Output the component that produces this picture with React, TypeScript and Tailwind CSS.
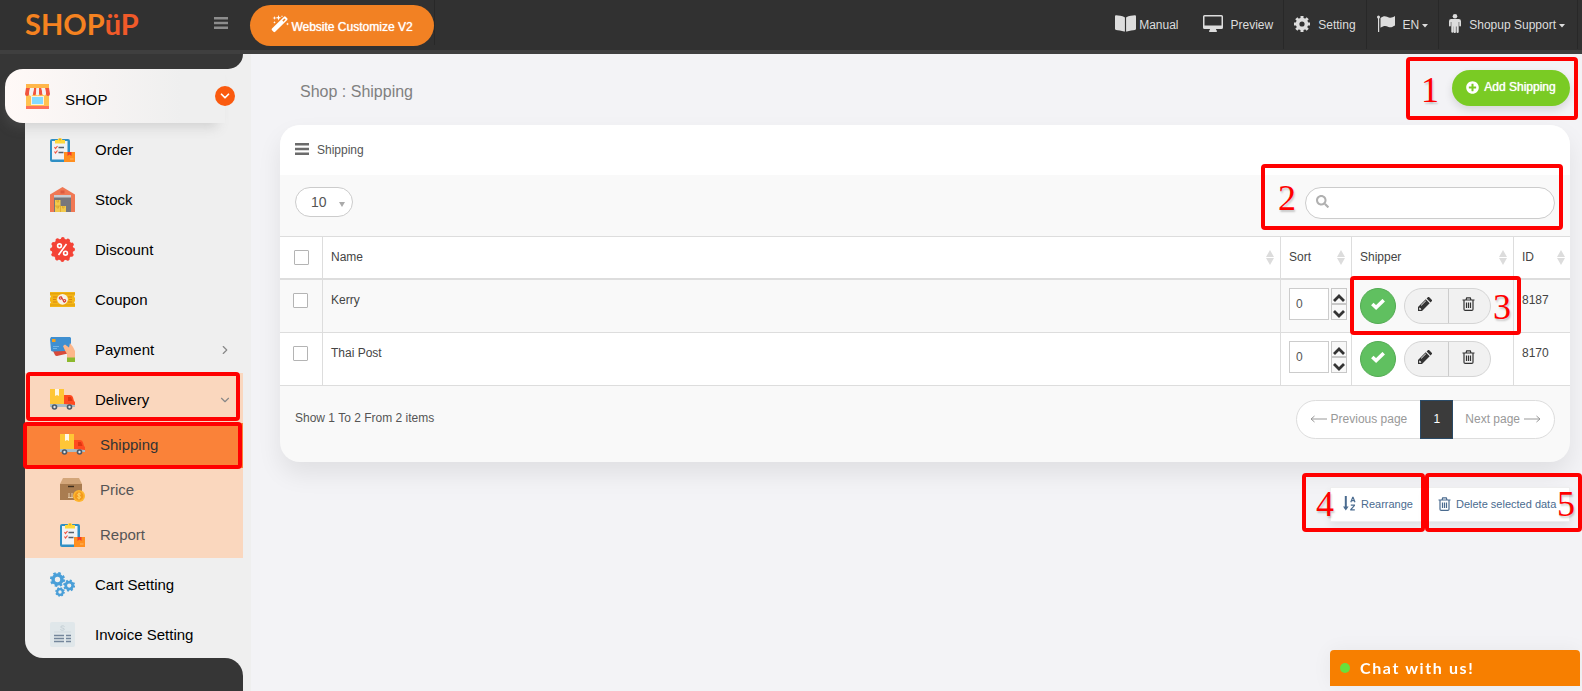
import type { ReactNode } from "react";
import clsx from "clsx";
import { FaBookOpen, FaPlusCircle, FaSearch } from "react-icons/fa";
import { ChevronDown, ChevronRight } from "lucide-react";

function ShopIcon() {
    return (
        <svg viewBox="0 0 25 25" className="size-[25px]" aria-hidden="true">
            <path d="M1 10h23v12H1z" fill="#ffc24f" />
            <path d="M1 0h23v4H1z" fill="#ffb74a" />
            <path d="M1 22h23v3H1z" fill="#ff7058" />
            <path d="M6 12h13v9H6z" fill="#fff0d9" />
            <path d="M7 13h11v7H7z" fill="#84dbff" />
            <path
                d="M1 4h4l-1 6a2 2 0 0 1-4 0zM9 4h2.500l-.5 6a1.900 1.900 0 0 1-3.500 0zM14 4h2.500l1 6a1.900 1.900 0 0 1-3.500 0zM20 4h4l1 6a2 2 0 0 1-4 0z"
                fill="#f1543f"
            />
            <path
                d="M5 4h4l-1 6a2 2 0 0 1-4 0zM11.500 4H14v6a1.500 1.500 0 0 1-3 0zM16.500 4H20l1 6a1.800 1.800 0 0 1-3.500 0z"
                fill="#f2f2f2"
            />
        </svg>
    );
}

function OrderIcon() {
    return (
        <svg viewBox="0 0 25 25" className="size-[25px]" aria-hidden="true">
            <rect x="0" y="2" width="20" height="23" rx="2" fill="#2f8fc4" />
            <path d="M2 4h15.500v18.500H2z" fill="#f1f2f4" />
            <path d="M5 3h2.500a2.600 2.600 0 0 1 5 0H15v3.500H5z" fill="#ffd83b" />
            <circle cx="10" cy="2.500" r="1" fill="#e8a91d" />
            <path
                d="m4.500 10 1 1.500L7.500 9M4.500 14.500l1 1.500 2-2.500"
                fill="none"
                stroke="#f1543f"
                strokeWidth="1.200"
            />
            <path d="M8.500 10.500H14M8.500 15.500h5" stroke="#56606b" strokeWidth="1.400" />
            <path d="M14 15h11v10H14z" fill="#ff8f1f" />
            <path d="M17.500 15h4v4l-2-1.500-2 1.500z" fill="#f23d2c" />
            <path d="M20 22h3.500" stroke="#ffb562" />
        </svg>
    );
}

function StockIcon() {
    return (
        <svg viewBox="0 0 25 25" className="size-[25px]" aria-hidden="true">
            <path d="M0 7.500 12.500 0 25 7.500V25H0z" fill="#f07854" />
            <path d="M10.500 3.500h4v3h-4z" fill="#dc5b3f" />
            <path d="M4 8h17v17H4z" fill="#77777b" />
            <path d="M4 8h17v2.500H4z" fill="#c9ccd1" />
            <path d="M5 13h5.500v6H16v6H5z" fill="#f2c94c" />
            <path
                d="M5 19h5.500v6M7 13v2h1.500v-2M7 19v2h1.500v-2M12.500 19v2H14v-2"
                fill="none"
                stroke="#d9a52c"
                strokeWidth=".8"
            />
        </svg>
    );
}

function DiscountIcon() {
    return (
        <svg viewBox="0 0 25 25" className="size-[25px]" aria-hidden="true">
            <circle cx="12.500" cy="12.500" r="10.800" fill="#f44336" />
            <circle
                cx="12.500"
                cy="12.500"
                r="10.600"
                fill="none"
                stroke="#f44336"
                strokeWidth="3.800"
                strokeDasharray="0.010 5.540"
                strokeLinecap="round"
            />
            <g fill="none" stroke="#fff" strokeWidth="1.600">
                <circle cx="9.500" cy="8.800" r="1.900" />
                <circle cx="15.500" cy="16.200" r="1.900" />
                <path d="m16.500 7-8 11" />
            </g>
        </svg>
    );
}

function CouponIcon() {
    return (
        <svg viewBox="0 0 25 25" className="size-[25px]" aria-hidden="true">
            <path
                d="M0 5h25v3l-1 1.500 1 1.500v3l-1 1.500 1 1v3.500H0v-3.500l1-1L0 14v-3l1-1.500L0 8z"
                fill="#f4b616"
            />
            <path d="M0 6.800h25M0 18h25" stroke="#dd9c0c" />
            <path
                d="M3 10h4M3 12.500h3M3 15h4M18 10h4M19 12.500h3M18 15h4"
                stroke="#d98312"
                strokeWidth="1.200"
            />
            <circle cx="12.500" cy="12.300" r="5.400" fill="#f6f1e6" />
            <g fill="none" stroke="#d8453c" strokeWidth="1.200">
                <circle cx="10.500" cy="11" r="1.200" />
                <circle cx="14.500" cy="13.700" r="1.200" />
                <path d="m11 9.500 3.500 6" />
            </g>
        </svg>
    );
}

function PaymentIcon() {
    return (
        <svg viewBox="0 0 25 25" className="size-[25px]" aria-hidden="true">
            <path d="m3 14 14-3 3 2v3l-13 3a2 2 0 0 1-2-1z" fill="#d84a3a" />
            <path
                d="M1 0h19l1 1v10l-6 3-12 .5a2 2 0 0 1-2-1L0 2z"
                fill="#3f8fd0"
            />
            <path d="M2 2h3.500v3H2z" fill="#f7a11b" />
            <path
                d="M3 9.500h6M3 11.500h4"
                stroke="#7fbce8"
                strokeWidth=".8"
            />
            <path
                d="m13 9 2-1.500 4 3 1-4.500 3 4 2 4v7h-8v-4l-2-3.500z"
                fill="#fdb78b"
            />
            <path d="M17 20.500h8V25h-8z" fill="#8db92e" />
        </svg>
    );
}

function TruckIcon() {
    return (
        <svg viewBox="0 0 25 25" className="size-[25px]" aria-hidden="true">
            <path d="M0 2h14v16H0z" fill="#ffc636" />
            <path d="M5 2h4v7L7 8 5 9z" fill="#fff6e3" />
            <path
                d="M14 8h6a3 3 0 0 1 3 2.500l1 3.500 1 1v4H14z"
                fill="#ff4a20"
            />
            <path d="M18 10h3l1.500 4H18z" fill="#e03511" />
            <path d="M0 17h14l11 1v2H0z" fill="#a7bdc7" />
            <circle cx="4.500" cy="20" r="2.800" fill="#4d5966" />
            <circle cx="4.500" cy="20" r="1.200" fill="#dfe6ea" />
            <circle cx="19.500" cy="20" r="2.800" fill="#4d5966" />
            <circle cx="19.500" cy="20" r="1.200" fill="#dfe6ea" />
        </svg>
    );
}

function PriceIcon() {
    return (
        <svg viewBox="0 0 25 25" className="size-[25px]" aria-hidden="true">
            <path d="M3 1h16l3 6H0z" fill="#d3a67a" />
            <path d="M0 7h22v16H0z" fill="#a97c50" />
            <path d="M8 9.500h6" stroke="#3f2e1e" strokeWidth="1.400" />
            <path
                d="M9 16v4M12 16v4M8 20.500h5"
                stroke="#e6cba8"
                strokeWidth="1"
            />
            <circle cx="19" cy="19" r="6" fill="#fdb62f" />
            <circle cx="19" cy="19" r="4.400" fill="#f39a1e" />
            <path
                d="M20.800 17.200c-1-1-3.400-.6-3.200.7.200 1.200 3 .8 3 2.300-.1 1.300-2.500 1.300-3.400.3M19 15.500v7"
                fill="none"
                stroke="#ffd76b"
            />
        </svg>
    );
}

/** Ring with eight teeth around it */
function Gear({ cx, cy, r }: { cx: number; cy: number; r: number }) {
    const tooth = (r * 2 * Math.PI) / 16;
    return (
        <g fill="none" stroke="currentColor">
            <circle cx={cx} cy={cy} r={r * 0.7} strokeWidth={r * 0.55} />
            <circle
                cx={cx}
                cy={cy}
                r={r}
                strokeWidth={r * 0.4}
                strokeDasharray={`${tooth} ${tooth}`}
            />
        </g>
    );
}

function CartIcon() {
    return (
        <svg
            viewBox="0 0 25 25"
            className="size-[25px] text-[#4a9fd8]"
            aria-hidden="true"
        >
            <Gear cx={7.5} cy={7.5} r={6.3} />
            <Gear cx={19.2} cy={13.5} r={5} />
            <Gear cx={10} cy={20} r={4} />
        </svg>
    );
}

function CogIcon() {
    return (
        <svg
            viewBox="0 0 16 16"
            className="size-4"
            fill="none"
            stroke="currentColor"
            aria-hidden="true"
        >
            <circle cx="8" cy="8" r="4.400" strokeWidth="3.600" />
            <path
                d="M8 0v3M8 13v3M0 8h3M13 8h3M2.300 2.300l2.200 2.200M11.500 11.500l2.200 2.200M2.300 13.700l2.200-2.200M11.500 4.500l2.200-2.200"
                strokeWidth="3"
            />
        </svg>
    );
}

function InvoiceIcon() {
    return (
        <svg viewBox="0 0 25 25" className="size-[25px]" aria-hidden="true">
            <rect width="25" height="25" rx="2" fill="#e0e7ea" />
            <path
                d="M14.500 4.500c-1-1-4-.8-3.800.6.200 1.400 3.800.6 3.600 2.200-.2 1.300-3 1.200-4 .2"
                fill="none"
                stroke="#c3ced4"
            />
            <path d="M4 10h17" stroke="#d0d9de" />
            <path
                d="M4 13.500h10M4 16.500h10M4 19.500h10M16 13.500h5M16 16.500h5M16 19.500h5"
                stroke="#74869b"
                strokeWidth="1.400"
            />
        </svg>
    );
}

function WandIcon() {
    return (
        <svg
            viewBox="0 0 18 18"
            className="size-[18px]"
            fill="currentColor"
            aria-hidden="true"
        >
            <path
                fillRule="evenodd"
                d="M1 13.500 13 1.800a1.200 1.200 0 0 1 1.700 0l1.500 1.500a1.200 1.200 0 0 1 0 1.700L4.200 16.700a1.200 1.200 0 0 1-1.700 0L1 15.200a1.200 1.200 0 0 1 0-1.700zM11.300 5.600l1.100 1.100 2.200-2.200-1.100-1.100z"
            />
            <path d="m3.500 1 .5 1.500 1.500.5-1.500.5L3.500 5 3 3.500 1.500 3 3 2.500zM7.500 0l.7 2 2 .7-2 .7-.7 2-.7-2-2-.7 2-.7zM11 0l.3.900.9.300-.9.300-.3 1-.3-1-.9-.3.9-.3zM16.500 7.500l.4 1.100 1.100.4-1.100.4-.4 1.100-.4-1.100L15 9l1.100-.4zM3.500 6l.4 1 1 .4-1 .4-.4 1-.4-1-1-.4 1-.4z" />
        </svg>
    );
}

function DesktopIcon() {
    return (
        <svg viewBox="0 0 20 17" className="h-[17px] w-5" aria-hidden="true">
            <path
                fillRule="evenodd"
                fill="currentColor"
                d="M1.500 0h17A1.500 1.500 0 0 1 20 1.500v11a1.500 1.500 0 0 1-1.500 1.500H13c0 1 1 1.500 1 2.200 0 .5-.3.800-.8.800H6.800c-.5 0-.8-.3-.8-.8C6 15.500 7 15 7 14H1.500A1.500 1.500 0 0 1 0 12.500v-11A1.500 1.500 0 0 1 1.500 0zM1.500 1.500v9h17v-9z"
            />
        </svg>
    );
}

function FlagIcon() {
    return (
        <svg
            viewBox="0 0 18 17"
            className="h-[17px] w-[18px]"
            fill="currentColor"
            aria-hidden="true"
        >
            <circle cx="1.500" cy="2" r="1.500" />
            <path d="M1 2h1.200v15H1zM3.500 3C7-.2 10 1.500 12 2.500c2 .8 4-.4 6-1.500v9.500c-2 1-4 2.500-6.500 1.500-2.500-1.200-4.500-1.500-8 .7z" />
        </svg>
    );
}

function MaleIcon() {
    return (
        <svg
            viewBox="0 0 12 19"
            className="h-[19px] w-3"
            fill="currentColor"
            aria-hidden="true"
        >
            <circle cx="6" cy="2.300" r="2.300" />
            <path d="M2.500 5h7A2.300 2.300 0 0 1 12 7.300v4.200a.9.900 0 0 1-1.800 0V8h-.5v10a1.100 1.100 0 0 1-1.100 1 1.100 1.100 0 0 1-1.100-1v-5.500h-.6V18c0 .6-.5 1-1.100 1a1.100 1.100 0 0 1-1.200-1v-5.500H4.400V18a1.100 1.100 0 0 1-2.100 0V8h-.5v3.500a.9.900 0 0 1-1.800 0V7.300A2.300 2.300 0 0 1 2.500 5z" />
        </svg>
    );
}

function PencilIcon() {
    return (
        <svg
            viewBox="0 0 14 14"
            className="size-[14px]"
            fill="currentColor"
            aria-hidden="true"
        >
            <path
                fillRule="evenodd"
                d="M0 14v-4L7.700 2.300l4 4L4 14zM1.200 11.200v1.600h1.600l.6-.6-1.600-1.600zM7.500 3.600 2.800 8.300l.5.5L8 4.100z"
            />
            <path d="m8.600 1.500 1.200-1.200a1 1 0 0 1 1.500 0l2.400 2.400a1 1 0 0 1 0 1.500l-1.200 1.200z" />
        </svg>
    );
}

function CheckIcon() {
    return (
        <svg
            viewBox="0 0 14 11"
            className="h-[11px] w-[14px]"
            fill="none"
            stroke="currentColor"
            strokeWidth="3.600"
            aria-hidden="true"
        >
            <path d="m1.300 5 3.800 3.500L12.700 1.200" />
        </svg>
    );
}

function SpinChevron({ className }: { className?: string }) {
    return (
        <svg
            viewBox="0 0 12 8"
            className={clsx("h-2 w-3 shrink-0", className)}
            fill="none"
            stroke="currentColor"
            strokeWidth="2.800"
            aria-hidden="true"
        >
            <path d="m1 7 5-5 5 5" />
        </svg>
    );
}

function CaretIcon() {
    return (
        <svg
            viewBox="0 0 6 4"
            className="mt-[3px] h-1 w-1.5"
            fill="currentColor"
            aria-hidden="true"
        >
            <path d="M0 0h6L3 3.500z" />
        </svg>
    );
}

function TrashIcon({ className }: { className: string }) {
    return (
        <svg
            viewBox="0 0 13 14"
            className={className}
            fill="none"
            stroke="currentColor"
            strokeWidth="1.200"
            aria-hidden="true"
        >
            <path d="M.5 3h12M4 3l.7-2.200h3.600L9 3M2 3v9.200c0 .7.500 1.200 1.200 1.200h6.600c.7 0 1.200-.5 1.200-1.200V3M4.500 5.500v5.500M6.500 5.500v5.500M8.500 5.500v5.500" />
        </svg>
    );
}

function SortAlphaIcon() {
    return (
        <svg
            viewBox="0 0 13 15"
            className="h-[15px] w-[13px]"
            fill="none"
            stroke="currentColor"
            aria-hidden="true"
        >
            <path d="M2.800 0v13" strokeWidth="2" />
            <path d="M0 10.500h5.600L2.800 14.500z" fill="currentColor" stroke="none" />
            <path
                d="m7.800 6.200 1.900-4.900h.4l1.900 4.900M8.500 4.700h2.800M7.800 9.200h3.600v.4l-3.600 3.900v.4h4"
                strokeWidth="1.200"
            />
        </svg>
    );
}

function BarsIcon({ className }: { className?: string }) {
    return (
        <svg
            viewBox="0 0 14 12"
            className={clsx("h-3 w-[14px]", className)}
            fill="currentColor"
            aria-hidden="true"
        >
            <path d="M0 0h14v2.500H0zM0 4.700h14v2.500H0zM0 9.500h14V12H0z" />
        </svg>
    );
}

function LongArrow({ className }: { className?: string }) {
    return (
        <svg
            viewBox="0 0 17 8"
            className={clsx("h-2 w-[17px]", className)}
            fill="none"
            stroke="currentColor"
            aria-hidden="true"
        >
            <path d="M0 4h16M12.500 1l3.500 3-3.500 3" />
        </svg>
    );
}

function SorterIcon() {
    return (
        <svg
            viewBox="0 0 8 15"
            className="h-[15px] w-2 shrink-0"
            fill="#dcdcdc"
            aria-hidden="true"
        >
            <path d="M4 0l4 7H0zM4 15l4-7H0z" />
        </svg>
    );
}

/** Red frame laid over the part of the page that a guide step talks about */
function Callout({
    className,
    children,
}: {
    className: string;
    children?: ReactNode;
}) {
    return (
        <div
            className={clsx(
                "pointer-events-none absolute z-20 flex items-center rounded-sm border-4 border-[#ff0000] pt-0.5 font-['Liberation_Serif',serif] text-4xl leading-none text-[#ff0000] [text-shadow:1px_2px_2px_rgba(0,0,0,0.2)]",
                className,
            )}
        >
            {children}
        </div>
    );
}

function TopLink({
    icon,
    label,
    className,
    caret,
}: {
    icon: ReactNode;
    label: string;
    className: string;
    caret?: boolean;
}) {
    return (
        <a
            href="#"
            className={clsx(
                "flex h-[49px] items-center whitespace-nowrap text-xs text-[#dddddd]",
                className,
            )}
        >
            <span className="pb-0.5">{icon}</span>
            <span className="flex items-center gap-[3px]">
                {label}
                {caret && <CaretIcon />}
            </span>
        </a>
    );
}

function TopBar() {
    return (
        <header className="flex h-[54px] shrink-0 items-start border-b-4 border-[#3f3f3f] bg-[#313131]">
            <a
                href="#"
                className="flex h-[47px] w-[214px] items-center pl-[25px] font-[Lato,sans-serif] text-[29px] font-bold leading-none text-[#f58220]"
            >
                SHOP<span className="text-[#f15a29]">üP</span>
            </a>
            <button
                type="button"
                aria-label="Toggle menu"
                className="mt-[17px] text-[#8d8d8d]"
            >
                <BarsIcon />
            </button>
            <div className="ml-[22px] h-[45px] border-r border-[#282828] pt-[5px]">
                <button
                    type="button"
                    className="flex h-[41px] w-[184px] items-center justify-center gap-0.5 rounded-full bg-[#f28123] pt-0.5 text-xs text-white [text-shadow:0_0_1px_#ffffff]"
                >
                    <span className="pb-1.5">
                        <WandIcon />
                    </span>
                    Website Customize V2
                </button>
            </div>
            <nav className="ml-auto mr-1 flex">
                <TopLink
                    icon={<FaBookOpen className="size-[21px]" />}
                    label="Manual"
                    className="mr-6 gap-[3px]"
                />
                <TopLink
                    icon={<DesktopIcon />}
                    label="Preview"
                    className="gap-2 border-r border-[#282828] pr-[10px]"
                />
                <TopLink
                    icon={<CogIcon />}
                    label="Setting"
                    className="gap-2 border-r border-[#282828] px-[10px]"
                />
                <TopLink
                    icon={<FlagIcon />}
                    label="EN"
                    caret
                    className="gap-2 border-r border-[#282828] px-[10px]"
                />
                <TopLink
                    icon={<MaleIcon />}
                    label="Shopup Support"
                    caret
                    className="gap-2 border-r border-[#282828] pl-[10px] pr-3"
                />
            </nav>
        </header>
    );
}

function MenuItem({
    icon,
    label,
    children,
}: {
    icon: ReactNode;
    label: string;
    children?: ReactNode;
}) {
    return (
        <a
            href="#"
            className="flex h-[50px] w-[218px] items-center pl-[25px] pr-[11px] pt-1 text-[15px] text-black"
        >
            <span className="pb-0.5">{icon}</span>
            <span className="ml-5 grow">{label}</span>
            {children}
        </a>
    );
}

function SubMenuItem({
    icon,
    label,
    active,
}: {
    icon: ReactNode;
    label: string;
    active?: boolean;
}) {
    return (
        <a
            href="#"
            className={clsx(
                "relative flex h-[45px] items-center gap-[15px] pl-[35px] text-[15px]",
                active ? "bg-[#fa8239] text-[#333333]" : "text-[#555555]",
            )}
        >
            <span className="pb-0.5">{icon}</span>
            {label}
            {active && <Callout className="-bottom-px -left-0.5 -top-px right-px" />}
        </a>
    );
}

function Sidebar() {
    return (
        <aside className="flex w-[251px] shrink-0 flex-col bg-[#363636]">
            <div className="bg-[#efefef]">
                <div className="h-[15px] w-[243px] rounded-br-[15px] bg-[#363636]" />
            </div>
            <div className="relative z-10 flex bg-[linear-gradient(to_right,transparent_25px,#efefef_25px)] pl-[5px]">
                <a
                    href="#"
                    className="flex h-[54px] w-[220px] items-center rounded-l-[18px] bg-[linear-gradient(to_right,#fff9f7,#efefef_80%)] pl-5 text-[15px] text-black shadow-[-4px_8px_12px_-4px_rgba(120,120,120,0.25)]"
                >
                    <ShopIcon />
                    <span className="ml-[15px] grow pt-2">SHOP</span>
                    <span className="-mr-[10px] flex size-5 items-center justify-center rounded-full bg-[#fa5a0f] text-white">
                        <ChevronDown className="size-[14px]" strokeWidth={3} />
                    </span>
                </a>
            </div>
            <nav className="ml-[25px] rounded-bl-[18px] bg-[#efefef]">
                <MenuItem icon={<OrderIcon />} label="Order" />
                <MenuItem icon={<StockIcon />} label="Stock" />
                <MenuItem icon={<DiscountIcon />} label="Discount" />
                <MenuItem icon={<CouponIcon />} label="Coupon" />
                <MenuItem icon={<PaymentIcon />} label="Payment">
                    <ChevronRight className="size-[14px] text-[#888888]" />
                </MenuItem>
                <div className="w-[218px] bg-[#fad7be]">
                    <div className="relative">
                        <MenuItem icon={<TruckIcon />} label="Delivery">
                            <ChevronDown className="size-[14px] text-[#888888]" />
                        </MenuItem>
                        <Callout className="-top-px bottom-0.5 left-px right-[3px]" />
                    </div>
                    <SubMenuItem icon={<TruckIcon />} label="Shipping" active />
                    <SubMenuItem icon={<PriceIcon />} label="Price" />
                    <SubMenuItem icon={<OrderIcon />} label="Report" />
                </div>
                <MenuItem icon={<CartIcon />} label="Cart Setting" />
                <MenuItem icon={<InvoiceIcon />} label="Invoice Setting" />
            </nav>
            <div className="flex grow flex-col bg-[linear-gradient(to_right,#363636_200px,#efefef_200px)]">
                <div className="w-[243px] grow rounded-tr-[18px] bg-[#363636]" />
            </div>
        </aside>
    );
}

const SHIPPERS = [
    { id: 8187, name: "Kerry", sort: 0 },
    { id: 8170, name: "Thai Post", sort: 0 },
];

const CHECKBOX =
    "block size-[15px] appearance-none rounded-[1px] border border-[#b4b4b4] bg-white";

function HeadCell({ label, last }: { label: string; last?: boolean }) {
    return (
        <th
            scope="col"
            className={clsx(
                "border-b-2 border-t border-[#dddddd] px-2 font-normal",
                !last && "border-r",
            )}
        >
            <div
                className={clsx(
                    "-mt-px flex items-center justify-between",
                    last ? "-mr-[3px]" : "-mr-0.5",
                )}
            >
                {label}
                <SorterIcon />
            </div>
        </th>
    );
}

function SortField({ name, value }: { name: string; value: number }) {
    return (
        <div className="flex gap-0.5">
            <input
                type="text"
                aria-label={`Sort order of ${name}`}
                defaultValue={value}
                className="h-8 w-10 border border-[#cccccc] bg-white px-1.5 text-xs text-[#555555]"
            />
            <div className="flex w-4 flex-col">
                <button
                    type="button"
                    aria-label="Move up"
                    className="flex h-4 items-center justify-center border border-[#c8c8c8] bg-[#f8f8f8] pt-1 text-[#333333]"
                >
                    <SpinChevron />
                </button>
                <button
                    type="button"
                    aria-label="Move down"
                    className="flex h-4 items-center justify-center border border-[#c8c8c8] bg-[#f8f8f8] pt-1 text-[#333333]"
                >
                    <SpinChevron className="rotate-180" />
                </button>
            </div>
        </div>
    );
}

function RowActions() {
    return (
        <div className="flex gap-2">
            <button
                type="button"
                aria-label="Active"
                className="flex size-9 items-center justify-center rounded-full border border-[#53ab53] bg-[#60c060] pb-1 text-white"
            >
                <CheckIcon />
            </button>
            <div className="flex h-9 w-[87px] overflow-hidden rounded-full border border-[#d5d5d5] bg-[#f1f1f1] text-[#333333]">
                <button
                    type="button"
                    aria-label="Edit"
                    className="flex w-11 items-center justify-center border-r border-[#cccccc] pb-1 pr-1"
                >
                    <PencilIcon />
                </button>
                <button
                    type="button"
                    aria-label="Delete"
                    className="flex grow items-center justify-center pb-1 pr-0.5"
                >
                    <TrashIcon className="h-[14px] w-[13px]" />
                </button>
            </div>
        </div>
    );
}

function ShippingTable() {
    return (
        <table className="w-full table-fixed border-separate border-spacing-0 text-left text-xs text-[#444444]">
            <colgroup>
                <col className="w-[43px]" />
                <col />
                <col className="w-[71px]" />
                <col className="w-[162px]" />
                <col className="w-14" />
            </colgroup>
            <thead>
                <tr className="h-11 bg-white">
                    <td className="border-b-2 border-r border-t border-[#dddddd] pl-[14px]">
                        <input
                            type="checkbox"
                            aria-label="Select all"
                            className={CHECKBOX}
                        />
                    </td>
                    <HeadCell label="Name" />
                    <HeadCell label="Sort" />
                    <HeadCell label="Shipper" />
                    <HeadCell label="ID" last />
                </tr>
            </thead>
            <tbody className="[&_td]:border-b [&_td]:border-[#dddddd] [&_td]:align-top">
                {SHIPPERS.map((shipper, i) => (
                    <tr
                        key={shipper.id}
                        className="h-[53px] odd:bg-[#f9f9f9] even:bg-white"
                    >
                        <td className="border-r pl-[13px] pt-[13px]">
                            <input
                                type="checkbox"
                                aria-label={`Select ${shipper.name}`}
                                className={CHECKBOX}
                            />
                        </td>
                        <td className="border-r px-2 pt-3">{shipper.name}</td>
                        <td className="border-r pl-2 pt-2">
                            <SortField
                                name={shipper.name}
                                value={shipper.sort}
                            />
                        </td>
                        <td className="relative border-r pl-2 pt-2">
                            <RowActions />
                            {i === 0 && (
                                <Callout className="-bottom-[3px] -left-0.5 -right-2 -top-1 justify-end pr-1.5">
                                    3
                                </Callout>
                            )}
                        </td>
                        <td className="px-2 pt-3">{shipper.id}</td>
                    </tr>
                ))}
            </tbody>
        </table>
    );
}

function ShippingCard() {
    return (
        <section className="rounded-[20px] bg-[#f9f9f9] shadow-[0_12px_24px_rgba(0,0,0,0.08)]">
            <h2 className="flex h-[50px] items-center gap-2 rounded-t-[20px] bg-white pl-[15px] text-xs text-[#555555]">
                <BarsIcon className="mb-[3px] text-[#6b6b6b]" />
                Shipping
            </h2>
            <div className="flex h-[61px] items-start justify-between px-[15px] pt-3">
                <div className="relative">
                    <select
                        aria-label="Items per page"
                        className="h-[30px] w-[58px] appearance-none rounded-full border border-[#cccccc] bg-white pl-[15px] text-sm leading-none text-[#555555]"
                    >
                        <option>10</option>
                        <option>25</option>
                        <option>50</option>
                    </select>
                    <svg
                        viewBox="0 0 6 5"
                        className="pointer-events-none absolute bottom-[10px] right-2 h-[5px] w-1.5 fill-[#aaaaaa]"
                        aria-hidden="true"
                    >
                        <path d="M0 0h6L3 5z" />
                    </svg>
                </div>
                <div className="relative">
                    <input
                        type="text"
                        aria-label="Search"
                        className="h-8 w-[250px] rounded-full border border-[#cccccc] bg-white pl-8 pr-3 text-xs text-[#555555]"
                    />
                    <FaSearch className="absolute left-[11px] top-2 size-[13px] text-[#b0b0b0]" />
                    <Callout className="-bottom-[11px] -left-11 -right-2 -top-[23px] pl-[13px]">
                        2
                    </Callout>
                </div>
            </div>
            <ShippingTable />
            <footer className="flex h-[76px] items-start justify-between px-[15px] pt-[14px] text-xs text-[#555555]">
                <p className="pt-[10px]">Show 1 To 2 From 2 items</p>
                <nav className="flex h-[39px] items-stretch rounded-full border border-[#dddddd] bg-white text-[#999999]">
                    <a
                        href="#"
                        className="flex items-center gap-1 px-[13px] pb-0.5"
                    >
                        <LongArrow className="rotate-180" />
                        Previous page
                    </a>
                    <a
                        href="#"
                        className="-my-px flex w-[33px] items-center justify-center border border-[#2a4a66] bg-[#3b3b3b] pb-0.5 text-white"
                    >
                        1
                    </a>
                    <a
                        href="#"
                        className="flex items-center gap-1 pb-0.5 pl-3 pr-[13px]"
                    >
                        Next page
                        <LongArrow />
                    </a>
                </nav>
            </footer>
        </section>
    );
}

function ChatWidget() {
    return (
        <button
            type="button"
            className="fixed bottom-[5px] right-0.5 flex h-9 w-[250px] items-center gap-[10px] rounded-t-[4px] bg-[#f77f00] pl-[10px] font-[Lato,sans-serif] text-base font-bold tracking-widest text-white shadow-[0_0_20px_rgba(0,0,0,0.05)]"
        >
            <span className="size-[10px] rounded-full bg-[#68e03c]" />
            Chat with us!
        </button>
    );
}

export default function App() {
    return (
        <div className="flex min-h-screen flex-col overflow-hidden bg-[#f3f3f6] font-['Liberation_Sans',Arial,sans-serif]">
            <TopBar />
            <div className="flex grow">
                <Sidebar />
                <main className="min-w-0 grow pl-[29px] pr-3">
                    <div className="flex h-[71px] items-start justify-between pl-5 pt-4">
                        <h1 className="pt-[10px] text-base text-[#808080]">
                            Shop : Shipping
                        </h1>
                        <div className="relative">
                            <button
                                type="button"
                                className="flex h-9 w-[118px] items-center justify-center gap-[5px] rounded-full bg-[#7acb24] pb-0.5 text-xs text-white shadow-[0_4px_8px_rgba(0,0,0,0.12)] [text-shadow:0_0_1px_#ffffff]"
                            >
                                <FaPlusCircle className="size-[13px]" />
                                Add Shipping
                            </button>
                            <Callout className="-bottom-[14px] -left-[46px] -right-2 -top-[13px] pl-[11px]">
                                1
                            </Callout>
                        </div>
                    </div>
                    <ShippingCard />
                    <div className="mt-[25px] flex justify-end text-[11px] text-[#4a6b8f]">
                        <div className="relative">
                            <button
                                type="button"
                                className="flex h-[35px] w-[95px] items-center gap-[5px] border border-[#eeeeee] bg-white pl-3 shadow-[0_4px_8px_rgba(0,0,0,0.08)]"
                            >
                                <span className="pb-0.5">
                                    <SortAlphaIcon />
                                </span>
                                Rearrange
                            </button>
                            <Callout className="-bottom-[10px] -left-7 -top-[14px] right-0 pl-[10px]">
                                4
                            </Callout>
                        </div>
                        <div className="relative">
                            <button
                                type="button"
                                className="flex h-[35px] w-[145px] items-center gap-[5px] border border-[#eeeeee] bg-white pl-3 shadow-[0_4px_8px_rgba(0,0,0,0.08)]"
                            >
                                <span className="pb-0.5">
                                    <TrashIcon className="h-[14px] w-[13px]" />
                                </span>
                                Delete selected data
                            </button>
                            <Callout className="-bottom-[10px] -right-3 -top-[14px] left-0 justify-end pr-[3px]">
                                5
                            </Callout>
                        </div>
                    </div>
                </main>
            </div>
            <ChatWidget />
        </div>
    );
}
